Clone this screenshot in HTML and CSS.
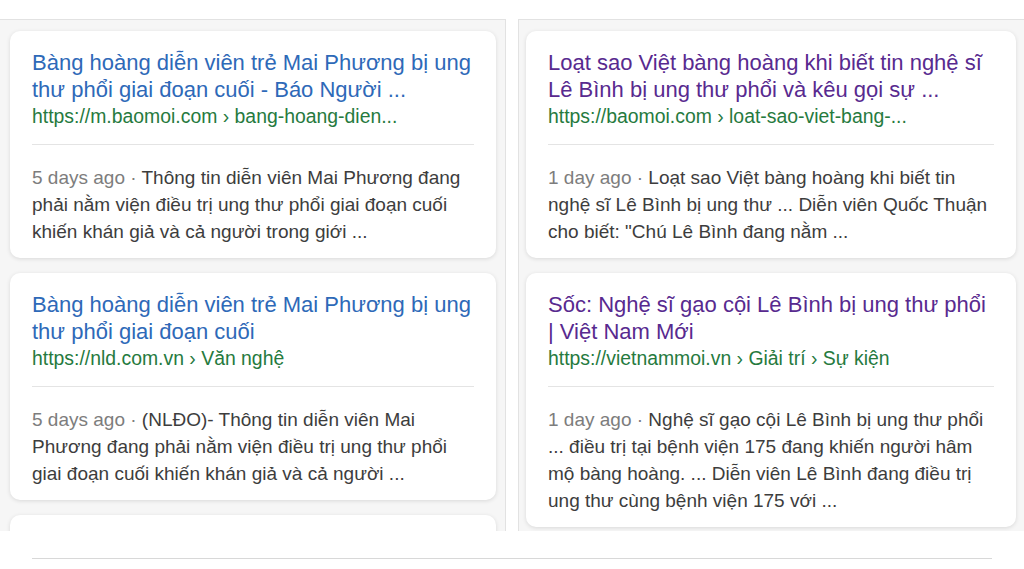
FILE: index.html
```html
<!DOCTYPE html>
<html lang="vi">
<head>
<meta charset="utf-8">
<title>Kết quả tìm kiếm</title>
<link rel="stylesheet" href="styles.css">
</head>
<body>
<div class="page">
  <div class="panels">
    <section class="panel panel-left">
      <article class="card">
        <div class="head">
          <a class="title">Bàng hoàng diễn viên trẻ Mai Phương bị ung thư phổi giai đoạn cuối - Báo Người ...</a>
          <div class="url">https://m.baomoi.com › bang-hoang-dien...</div>
        </div>
        <p class="snippet"><span class="date">5 days ago ·</span> Thông tin diễn viên Mai Phương đang phải nằm viện điều trị ung thư phổi giai đoạn cuối khiến khán giả và cả người trong giới ...</p>
      </article>
      <article class="card">
        <div class="head">
          <a class="title">Bàng hoàng diễn viên trẻ Mai Phương bị ung thư phổi giai đoạn cuối</a>
          <div class="url">https://nld.com.vn › Văn nghệ</div>
        </div>
        <p class="snippet"><span class="date">5 days ago ·</span> (NLĐO)- Thông tin diễn viên Mai Phương đang phải nằm viện điều trị ung thư phổi giai đoạn cuối khiến khán giả và cả người ...</p>
      </article>
      <article class="card card-stub"></article>
    </section>
    <section class="panel panel-right">
      <article class="card">
        <div class="head">
          <a class="title visited">Loạt sao Việt bàng hoàng khi biết tin nghệ sĩ Lê Bình bị ung thư phổi và kêu gọi sự ...</a>
          <div class="url">https://baomoi.com › loat-sao-viet-bang-...</div>
        </div>
        <p class="snippet"><span class="date">1 day ago ·</span> Loạt sao Việt bàng hoàng khi biết tin nghệ sĩ Lê Bình bị ung thư ... Diễn viên Quốc Thuận cho biết: "Chú Lê Bình đang nằm ...</p>
      </article>
      <article class="card">
        <div class="head">
          <a class="title visited">Sốc: Nghệ sĩ gạo cội Lê Bình bị ung thư phổi | Việt Nam Mới</a>
          <div class="url">https://vietnammoi.vn › Giải trí › Sự kiện</div>
        </div>
        <p class="snippet"><span class="date">1 day ago ·</span> Nghệ sĩ gạo cội Lê Bình bị ung thư phổi ... điều trị tại bệnh viện 175 đang khiến người hâm mộ bàng hoàng. ... Diễn viên Lê Bình đang điều trị ung thư cùng bệnh viện 175 với ...</p>
      </article>
    </section>
  </div>
  <div class="footer"><div class="rule"></div></div>
</div>
</body>
</html>
```

FILE: styles.css
```css
* { box-sizing: border-box; }
html, body { margin: 0; padding: 0; background: #ffffff; }
body {
  font-family: "Liberation Sans", Arial, sans-serif;
  width: 1024px;
  height: 569px;
  overflow: hidden;
}
.page { padding-top: 19px; }
.panels {
  display: flex;
  gap: 12px;
  height: 512px;
  overflow: hidden;
}
.panel {
  background: #f6f6f6;
  border-top: 1px solid #e2e2e2;
  display: flex;
  flex-direction: column;
  gap: 15px;
  padding-top: 11px;
}
.panel-left {
  width: 506px;
  border-right: 1px solid #e2e2e2;
  padding-left: 10px;
  padding-right: 9px;
}
.panel-right {
  width: 506px;
  border-left: 1px solid #e2e2e2;
  padding-left: 7px;
  padding-right: 8px;
}
.card {
  background: #ffffff;
  border-radius: 10px;
  box-shadow: 0 1px 4px rgba(0,0,0,0.12);
  padding: 18px 22px 13px 22px;
  flex: none;
}
.card-stub { height: 40px; }
.head {
  border-bottom: 1px solid #e4e4e4;
  padding-bottom: 15px;
  margin-bottom: 19px;
}
.title {
  display: block;
  color: #2e69b8;
  font-size: 22px;
  line-height: 27px;
  text-decoration: none;
}
.title.visited { color: #582a8f; }
.url {
  color: #267a3e;
  font-size: 19.4px;
  line-height: 26px;
}
.snippet {
  margin: 0;
  color: #3d3d3d;
  font-size: 19px;
  line-height: 27px;
}
.date {
  display: inline-block;
  color: #7d7d7d;
}
.footer {
  padding: 27px 32px 0 32px;
}
.rule {
  width: 960px;
  border-top: 1px solid #d8d8d8;
}
```
